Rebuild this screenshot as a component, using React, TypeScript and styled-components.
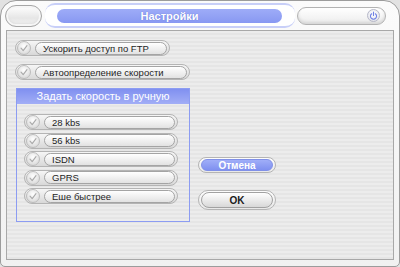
import React from 'react';
import styled, { createGlobalStyle } from 'styled-components';

const Global = createGlobalStyle`
  html, body { margin: 0; padding: 0; background: #e2e2e2; }
  body { font-family: "Liberation Sans", Arial, sans-serif; }
  * { box-sizing: border-box; }
`;

const Window = styled.div`
  width: 400px;
  height: 267px;
  border: 1px solid #9c9c9c;
  border-radius: 16px 16px 5px 5px;
  background: linear-gradient(#fbfbfb, #f1f1f1);
  padding: 0 5px 6px 5px;
  display: flex;
  flex-direction: column;
`;

const TitleBar = styled.div`
  height: 29px;
  display: flex;
  align-items: center;
  margin: 0 8px 0 -1px;
`;

const CornerPill = styled.div`
  width: 37px;
  height: 22px;
  border: 1px solid #a6a6a6;
  border-radius: 11px;
  background: linear-gradient(#ffffff, #e6e6e6 60%, #f4f4f4);
  box-shadow: inset 0 0 0 2px #f6f6f6, inset 0 -2px 3px #cfcfcf;
  flex: none;
`;

const Trough = styled.div`
  flex: 1;
  height: 25px;
  margin: 0 2px 0 3px;
  border-top: 2px solid #c8cff8;
  border-bottom: 2px solid #c8cff8;
  border-radius: 10px;
  background: #ffffff;
  display: flex;
  align-items: center;
  padding: 0 13px 0 12px;
`;

const TitleText = styled.div`
  flex: 1;
  height: 14px;
  border-radius: 7px;
  background: linear-gradient(#9eacf8, #8898f2);
  color: #ffffff;
  font-size: 11px;
  font-weight: bold;
  line-height: 14px;
  text-align: center;
  text-shadow: 0 0 1px #5a6ad0;
`;

const ControlPill = styled.div`
  width: 89px;
  height: 18px;
  border: 1px solid #b2b2b2;
  border-radius: 9px;
  background: linear-gradient(#ffffff, #ececec);
  box-shadow: inset 0 -2px 3px #d6d6d6;
  display: flex;
  align-items: center;
  justify-content: flex-end;
  padding-right: 5px;
  flex: none;
`;

const PowerButton = styled.div`
  width: 13px;
  height: 13px;
  border-radius: 50%;
  border: 1px solid #b6b8c8;
  background: radial-gradient(circle at 50% 35%, #ffffff, #dcdde6);
  display: flex;
  align-items: center;
  justify-content: center;
`;

const Content = styled.div`
  flex: 1;
  border: 1px solid #a8a8a8;
  background: repeating-linear-gradient(to bottom, #ececec 0 2px, #e5e5e5 2px 4px);
  padding: 9px 8px;
  display: flex;
  flex-direction: column;
  align-items: flex-start;
  gap: 8px;
`;

const OptionPill = styled.div<{ $w: number }>`
  width: ${(p) => p.$w}px;
  height: 16px;
  border: 1px solid #b4b4b4;
  border-radius: 8px;
  background: linear-gradient(#f6f6f6, #d8d8d8);
  display: flex;
  align-items: center;
  gap: 4px;
  padding: 0 2px 0 1px;
  flex: none;
`;

const Radio = styled.div`
  width: 14px;
  height: 14px;
  border-radius: 50%;
  border: 1px solid #bcbcbc;
  background: radial-gradient(circle at 50% 35%, #ffffff, #d2d2d2);
  display: flex;
  align-items: center;
  justify-content: center;
  flex: none;
`;

const Label = styled.div`
  flex: 1;
  height: 13px;
  border: 1px solid #a4a4a4;
  border-radius: 7px;
  background: linear-gradient(#ffffff, #e2e2e2);
  font-size: 9.5px;
  line-height: 11px;
  color: #1e1e1e;
  padding-left: 7px;
  white-space: nowrap;
  overflow: hidden;
`;

const LowerRow = styled.div`
  display: flex;
  gap: 8px;
  margin-left: 1px;
`;

const GroupBox = styled.div`
  width: 174px;
  height: 134px;
  border: 1px solid #8c9cf2;
  display: flex;
  flex-direction: column;
`;

const GroupHeader = styled.div`
  height: 15px;
  background: linear-gradient(#8090f0, #a2aef6);
  color: #ffffff;
  font-size: 11px;
  line-height: 15px;
  text-align: center;
`;

const GroupList = styled.div`
  display: flex;
  flex-direction: column;
  gap: 2.6px;
  padding: 10px 11px 0 7px;
`;

const ButtonColumn = styled.div`
  display: flex;
  flex-direction: column;
  gap: 17px;
  padding-top: 69px;
`;

const ButtonRing = styled.div<{ $h: number }>`
  width: 78px;
  height: ${(p) => p.$h}px;
  border: 1px solid #b4b4b4;
  border-radius: ${(p) => p.$h / 2}px;
  background: linear-gradient(#fdfdfd, #e8e8e8);
  padding: 1px 2px;
  display: flex;
`;

const ButtonFace = styled.div<{ $primary?: boolean }>`
  flex: 1;
  border-radius: 8px;
  border: 1px solid ${(p) => (p.$primary ? '#8090e8' : '#a2a2a2')};
  background: ${(p) =>
    p.$primary
      ? 'linear-gradient(#a0aef8, #7f90f0)'
      : 'linear-gradient(#ffffff, #d8d8d8)'};
  color: ${(p) => (p.$primary ? '#ffffff' : '#1a1a1a')};
  font-size: 10px;
  font-weight: bold;
  display: flex;
  align-items: center;
  justify-content: center;
`;

const Check = () => (
  <svg width="10" height="10" viewBox="0 0 10 10">
    <path d="M2 5.2 L4.2 7.6 L8 2.6" fill="none" stroke="#a9a9a9" strokeWidth="1.1" strokeLinecap="round" strokeLinejoin="round" />
  </svg>
);

const PowerIcon = () => (
  <svg width="9" height="9" viewBox="0 0 10 10">
    <path d="M3 3 A3.4 3.4 0 1 0 7 3" fill="none" stroke="#6f80e4" strokeWidth="1.2" strokeLinecap="round" />
    <path d="M5 1.2 V5" fill="none" stroke="#6f80e4" strokeWidth="1.2" strokeLinecap="round" />
  </svg>
);

const Option = ({ width, label }: { width: number; label: string }) => (
  <OptionPill $w={width}>
    <Radio>
      <Check />
    </Radio>
    <Label>{label}</Label>
  </OptionPill>
);

const speeds = ['28 kbs', '56 kbs', 'ISDN', 'GPRS', 'Еше быстрее'];

export default function App() {
  return (
    <>
      <Global />
      <Window>
        <TitleBar>
          <CornerPill />
          <Trough>
            <TitleText>Настройки</TitleText>
          </Trough>
          <ControlPill>
            <PowerButton>
              <PowerIcon />
            </PowerButton>
          </ControlPill>
        </TitleBar>
        <Content>
          <Option width={155} label="Ускорить доступ по FTP" />
          <Option width={175} label="Автоопределение скорости" />
          <LowerRow>
            <GroupBox>
              <GroupHeader>Задать скорость в ручную</GroupHeader>
              <GroupList>
                {speeds.map((s) => (
                  <Option key={s} width={154} label={s} />
                ))}
              </GroupList>
            </GroupBox>
            <ButtonColumn>
              <ButtonRing $h={16}>
                <ButtonFace $primary>Отмена</ButtonFace>
              </ButtonRing>
              <ButtonRing $h={20}>
                <ButtonFace>OK</ButtonFace>
              </ButtonRing>
            </ButtonColumn>
          </LowerRow>
        </Content>
      </Window>
    </>
  );
}
